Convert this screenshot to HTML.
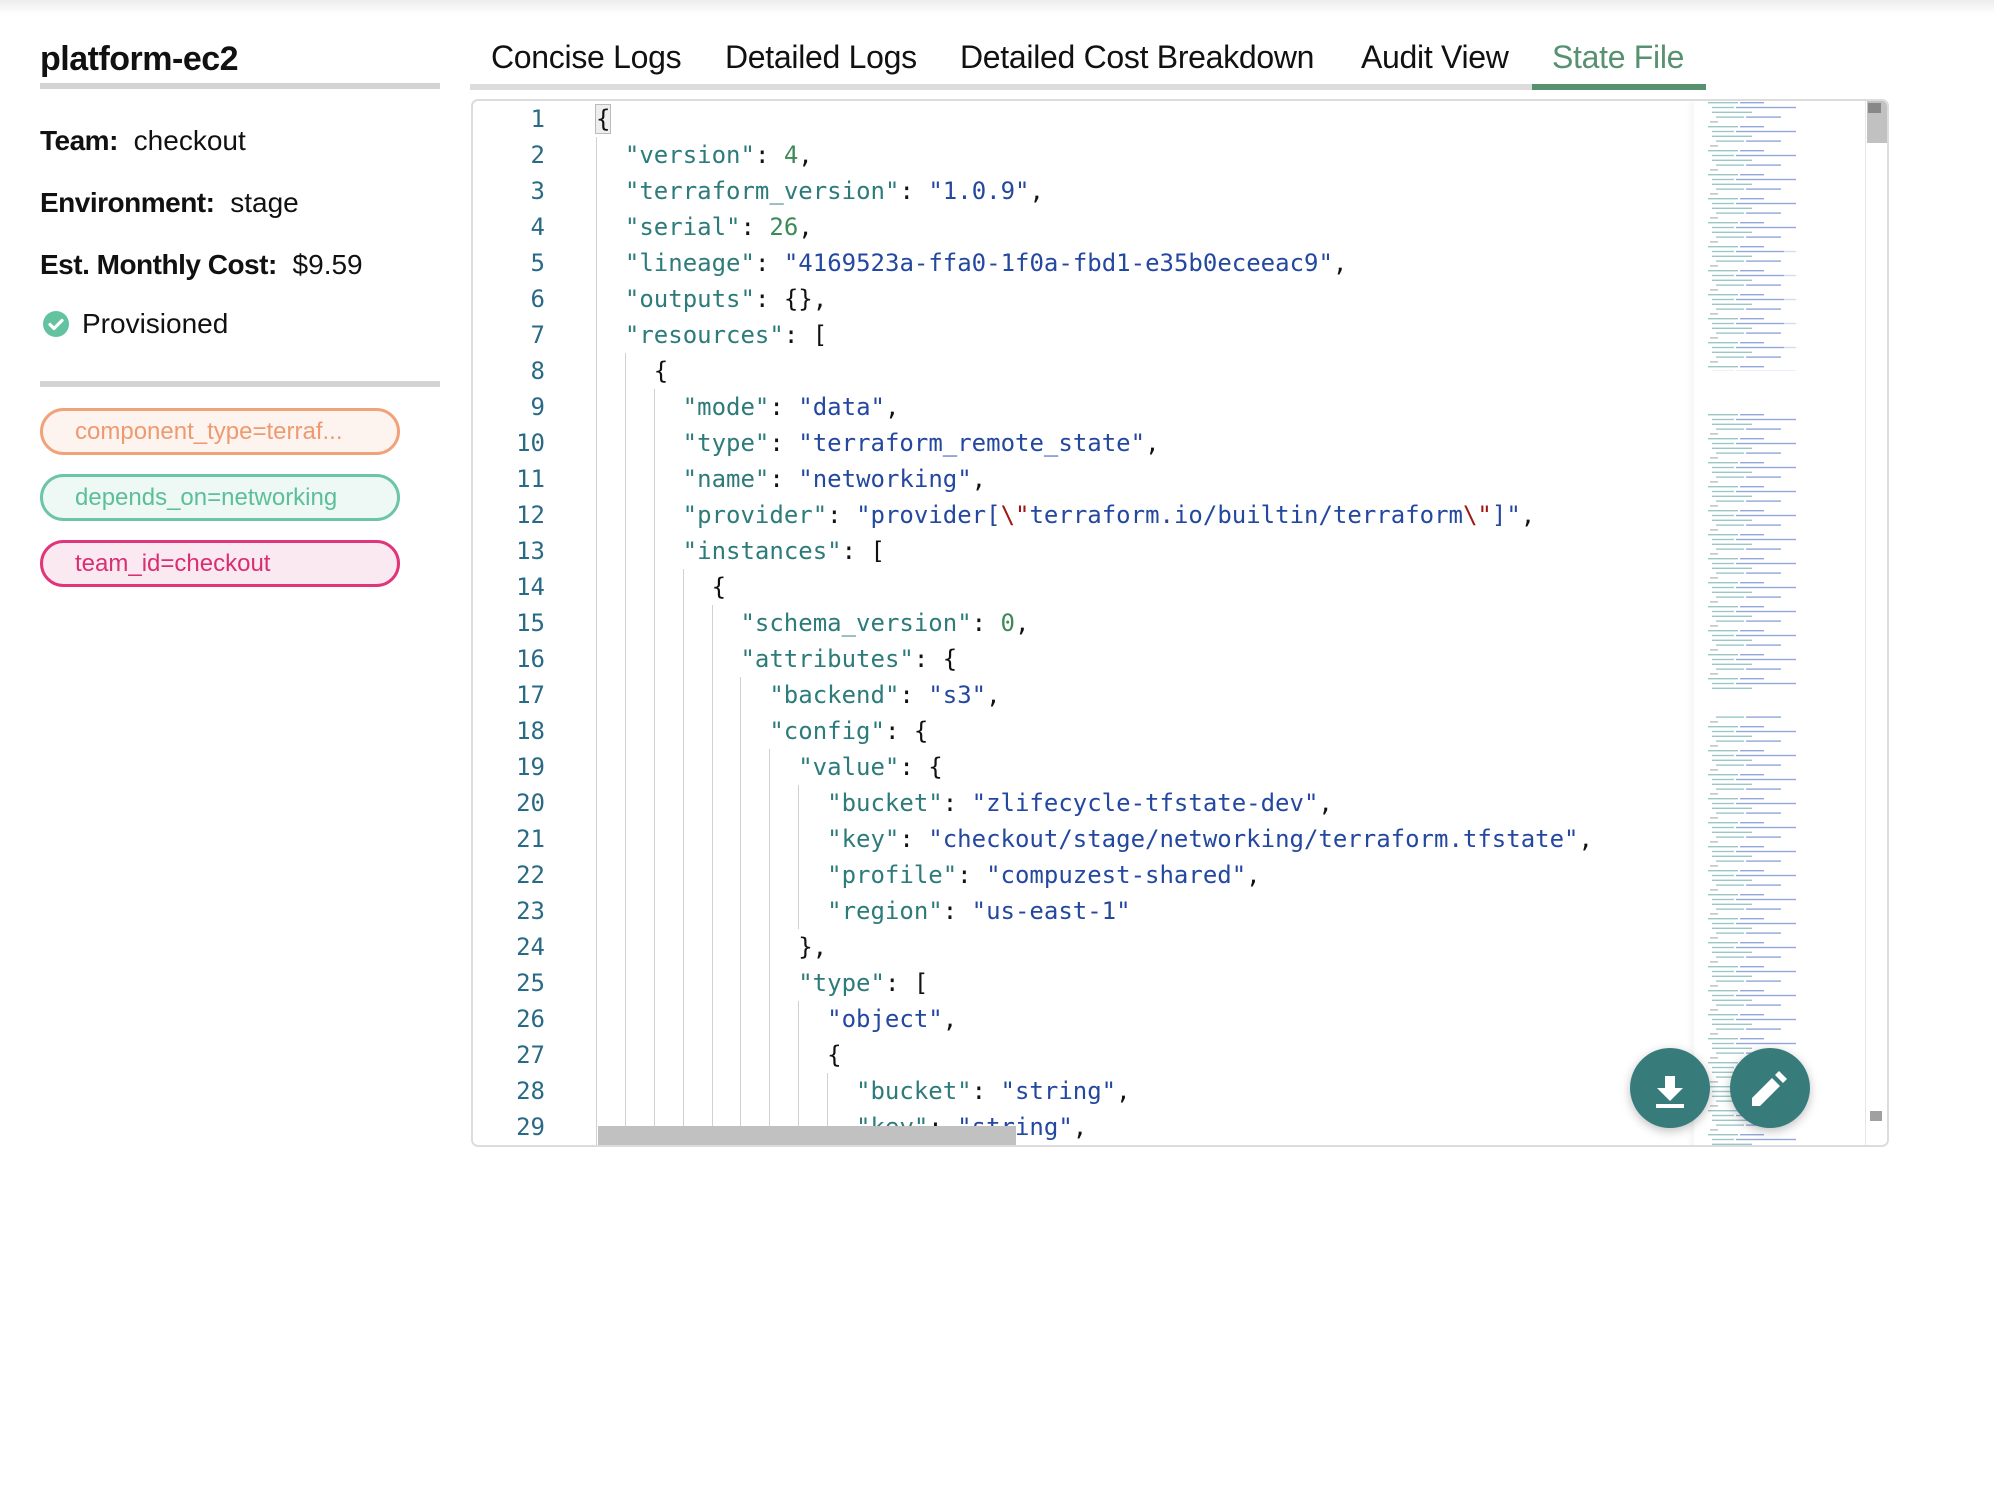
<!DOCTYPE html>
<html><head><meta charset="utf-8"><style>
*{margin:0;padding:0;box-sizing:border-box}
html,body{width:1994px;height:1510px;background:#fff;overflow:hidden}
body{font-family:"Liberation Sans",sans-serif;color:#111;position:relative}
.topshade{position:absolute;left:0;top:0;width:1994px;height:14px;background:linear-gradient(#ececec,#fff)}
.title{position:absolute;left:40px;top:40px;font-size:34px;font-weight:bold;letter-spacing:-0.5px}
.hr{position:absolute;left:40px;width:400px;height:6px;background:#d3d3d3}
.info{position:absolute;left:40px;font-size:28px}
.info b{font-weight:bold;letter-spacing:-0.5px;margin-right:8px}
.pill{position:absolute;left:40px;width:360px;height:47px;border:3px solid;border-radius:24px;font-size:24px;padding-left:32px;line-height:41px}
.tab{position:absolute;top:39px;font-size:32px;color:#111;letter-spacing:-0.3px}
.editor{position:absolute;left:471px;top:99px;width:1418px;height:1048px;border:2px solid #dcdcdc;border-radius:7px;overflow:hidden;background:#fff}
.ln{position:absolute;left:0;top:0;width:72px;text-align:right;font-family:"DejaVu Sans Mono",monospace;font-size:24px;line-height:36px;color:#2a6a85}
.code{position:absolute;left:123px;top:0;font-family:"DejaVu Sans Mono",monospace;font-size:24px;line-height:36px;color:#111}
.code div{height:36px;white-space:pre}
.g{display:inline-block;width:28.9px;border-left:1.5px solid #d0d0d0;height:36px;vertical-align:top}
.k{color:#2d7b7a}.s{color:#2448a0}.n{color:#3d8a58}.e{color:#a31515}
.mini{position:absolute;left:1221px;top:0;width:170px;height:1048px;background:#fff;box-shadow:-4px 0 6px rgba(0,0,0,0.04)}
.vs{position:absolute;left:1392px;top:0;width:24px;height:1048px;border-left:1px solid #e6e6e6}
.hs{position:absolute;left:125px;bottom:0;width:418px;height:19px;background:#c1c1c1}
.fab{position:absolute;width:80px;height:80px;border-radius:50%;background:#377c7b;box-shadow:0 3px 10px rgba(0,0,0,0.25)}
</style></head><body>
<div class="topshade"></div>
<div class="title">platform-ec2</div>
<div class="hr" style="top:83px"></div>
<div class="info" style="top:125px"><b>Team:</b> checkout</div>
<div class="info" style="top:187px"><b>Environment:</b> stage</div>
<div class="info" style="top:249px"><b>Est. Monthly Cost:</b> $9.59</div>
<div class="info" style="top:308px;display:flex;align-items:center">
<svg width="28" height="28" viewBox="0 0 28 28" style="margin-right:12px;margin-left:2px"><circle cx="14" cy="14" r="13" fill="#63c3a0"/><path d="M8 14.5l4 4 8-8" stroke="#fff" stroke-width="3.2" fill="none" stroke-linecap="round" stroke-linejoin="round"/></svg>Provisioned</div>
<div class="hr" style="top:381px"></div>
<div class="pill" style="top:408px;border-color:#f0a27a;background:#fdf3ef;color:#ee9a70">component_type=terraf...</div>
<div class="pill" style="top:474px;border-color:#6cc5a4;background:#eef8f4;color:#5cbf99">depends_on=networking</div>
<div class="pill" style="top:540px;border-color:#e0357a;background:#fbe9f1;color:#d92e72">team_id=checkout</div>

<div class="tab" style="left:491px">Concise Logs</div>
<div class="tab" style="left:725px">Detailed Logs</div>
<div class="tab" style="left:960px">Detailed Cost Breakdown</div>
<div class="tab" style="left:1361px">Audit View</div>
<div class="tab" style="left:1552px;color:#579170">State File</div>
<div style="position:absolute;left:470px;top:84px;width:1236px;height:6px;background:#dcdcdc"></div>
<div style="position:absolute;left:1532px;top:84px;width:174px;height:6px;background:#579170"></div>

<div class="editor">
<div class="ln"><div>1</div><div>2</div><div>3</div><div>4</div><div>5</div><div>6</div><div>7</div><div>8</div><div>9</div><div>10</div><div>11</div><div>12</div><div>13</div><div>14</div><div>15</div><div>16</div><div>17</div><div>18</div><div>19</div><div>20</div><div>21</div><div>22</div><div>23</div><div>24</div><div>25</div><div>26</div><div>27</div><div>28</div><div>29</div></div>
<div class="code"><div><span style="background:#eee;outline:1.5px solid #bbb">{</span></div><div><span class="g"></span><span class="k">"version"</span>: <span class="n">4</span>,</div><div><span class="g"></span><span class="k">"terraform_version"</span>: <span class="s">"1.0.9"</span>,</div><div><span class="g"></span><span class="k">"serial"</span>: <span class="n">26</span>,</div><div><span class="g"></span><span class="k">"lineage"</span>: <span class="s">"4169523a-ffa0-1f0a-fbd1-e35b0eceeac9"</span>,</div><div><span class="g"></span><span class="k">"outputs"</span>: {},</div><div><span class="g"></span><span class="k">"resources"</span>: [</div><div><span class="g"></span><span class="g"></span>{</div><div><span class="g"></span><span class="g"></span><span class="g"></span><span class="k">"mode"</span>: <span class="s">"data"</span>,</div><div><span class="g"></span><span class="g"></span><span class="g"></span><span class="k">"type"</span>: <span class="s">"terraform_remote_state"</span>,</div><div><span class="g"></span><span class="g"></span><span class="g"></span><span class="k">"name"</span>: <span class="s">"networking"</span>,</div><div><span class="g"></span><span class="g"></span><span class="g"></span><span class="k">"provider"</span>: <span class="s">"provider[<span class="e">\"</span>terraform.io/builtin/terraform<span class="e">\"</span>]"</span>,</div><div><span class="g"></span><span class="g"></span><span class="g"></span><span class="k">"instances"</span>: [</div><div><span class="g"></span><span class="g"></span><span class="g"></span><span class="g"></span>{</div><div><span class="g"></span><span class="g"></span><span class="g"></span><span class="g"></span><span class="g"></span><span class="k">"schema_version"</span>: <span class="n">0</span>,</div><div><span class="g"></span><span class="g"></span><span class="g"></span><span class="g"></span><span class="g"></span><span class="k">"attributes"</span>: {</div><div><span class="g"></span><span class="g"></span><span class="g"></span><span class="g"></span><span class="g"></span><span class="g"></span><span class="k">"backend"</span>: <span class="s">"s3"</span>,</div><div><span class="g"></span><span class="g"></span><span class="g"></span><span class="g"></span><span class="g"></span><span class="g"></span><span class="k">"config"</span>: {</div><div><span class="g"></span><span class="g"></span><span class="g"></span><span class="g"></span><span class="g"></span><span class="g"></span><span class="g"></span><span class="k">"value"</span>: {</div><div><span class="g"></span><span class="g"></span><span class="g"></span><span class="g"></span><span class="g"></span><span class="g"></span><span class="g"></span><span class="g"></span><span class="k">"bucket"</span>: <span class="s">"zlifecycle-tfstate-dev"</span>,</div><div><span class="g"></span><span class="g"></span><span class="g"></span><span class="g"></span><span class="g"></span><span class="g"></span><span class="g"></span><span class="g"></span><span class="k">"key"</span>: <span class="s">"checkout/stage/networking/terraform.tfstate"</span>,</div><div><span class="g"></span><span class="g"></span><span class="g"></span><span class="g"></span><span class="g"></span><span class="g"></span><span class="g"></span><span class="g"></span><span class="k">"profile"</span>: <span class="s">"compuzest-shared"</span>,</div><div><span class="g"></span><span class="g"></span><span class="g"></span><span class="g"></span><span class="g"></span><span class="g"></span><span class="g"></span><span class="g"></span><span class="k">"region"</span>: <span class="s">"us-east-1"</span></div><div><span class="g"></span><span class="g"></span><span class="g"></span><span class="g"></span><span class="g"></span><span class="g"></span><span class="g"></span>},</div><div><span class="g"></span><span class="g"></span><span class="g"></span><span class="g"></span><span class="g"></span><span class="g"></span><span class="g"></span><span class="k">"type"</span>: [</div><div><span class="g"></span><span class="g"></span><span class="g"></span><span class="g"></span><span class="g"></span><span class="g"></span><span class="g"></span><span class="g"></span><span class="s">"object"</span>,</div><div><span class="g"></span><span class="g"></span><span class="g"></span><span class="g"></span><span class="g"></span><span class="g"></span><span class="g"></span><span class="g"></span>{</div><div><span class="g"></span><span class="g"></span><span class="g"></span><span class="g"></span><span class="g"></span><span class="g"></span><span class="g"></span><span class="g"></span><span class="g"></span><span class="k">"bucket"</span>: <span class="s">"string"</span>,</div><div><span class="g"></span><span class="g"></span><span class="g"></span><span class="g"></span><span class="g"></span><span class="g"></span><span class="g"></span><span class="g"></span><span class="g"></span><span class="k">"key"</span>: <span class="s">"string"</span>,</div></div>
<div class="hs"></div>
<div class="mini">
<svg width="170" height="1048">
<defs>
<pattern id="p" width="170" height="24" patternUnits="userSpaceOnUse">
<rect x="14" y="1" width="30" height="1.4" fill="#4a9a98"/><rect x="46" y="1" width="24" height="1.4" fill="#3a5fb8"/>
<rect x="18" y="5.8" width="22" height="1.4" fill="#4a9a98"/><rect x="42" y="5.8" width="60" height="1.4" fill="#3a5fb8"/>
<rect x="18" y="10.6" width="40" height="1.4" fill="#4a9a98"/>
<rect x="22" y="15.4" width="28" height="1.4" fill="#4a9a98"/><rect x="52" y="15.4" width="35" height="1.4" fill="#3a5fb8"/>
<rect x="16" y="20.2" width="8" height="1.4" fill="#888"/>
</pattern>
</defs>
<rect x="0" y="0" width="170" height="1048" fill="url(#p)" opacity="0.55"/>
<rect x="0" y="270" width="170" height="40" fill="#fff"/>
<rect x="0" y="590" width="170" height="22" fill="#fff"/>
<rect x="90" y="130" width="80" height="120" fill="#fff" opacity="0.6"/>
</svg>
</div>
<div class="vs"><div style="position:absolute;left:1px;top:0;width:22px;height:42px;background:#c1c1c1"></div><div style="position:absolute;left:2px;top:2px;width:13px;height:10px;background:#888"></div><div style="position:absolute;left:4px;top:1010px;width:12px;height:10px;background:#a0a0a0"></div></div>
</div>

<div class="fab" style="left:1630px;top:1048px">
<svg width="80" height="80" viewBox="0 0 80 80"><path d="M35 28h10v12h8l-13 13-13-13h8z" fill="#fff"/><rect x="26" y="56" width="28" height="4" fill="#fff"/></svg>
</div>
<div class="fab" style="left:1730px;top:1048px">
<svg width="80" height="80" viewBox="0 0 80 80"><path d="M22 58v-8l20-20 8 8-20 20z M45 27l4-4 8 8-4 4z" fill="#fff"/></svg>
</div>
</body></html>
